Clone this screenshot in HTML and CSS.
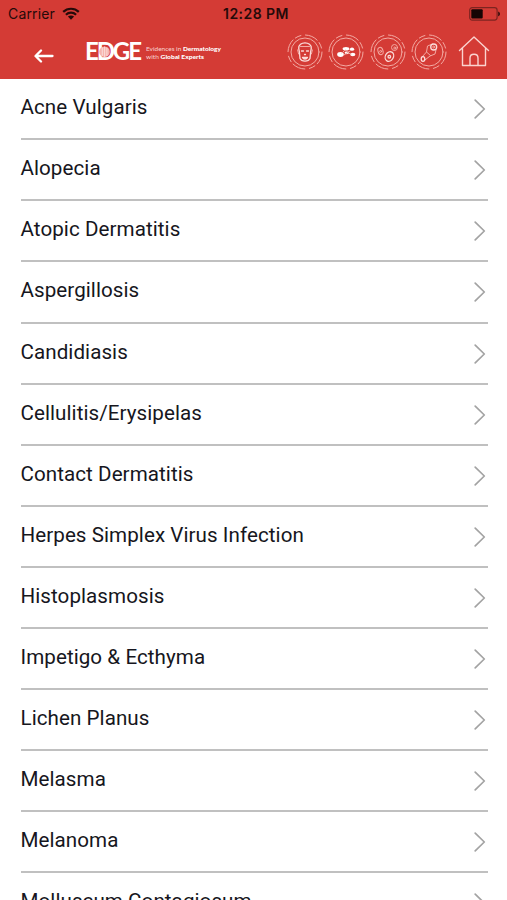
FILE: index.html
```html
<!DOCTYPE html>
<html lang="en">
  <head>
    <meta charset="utf-8" />
    <title>EDGE</title>
    <link rel="stylesheet" href="styles.css" />
  </head>
  <body>
    <header class="header">
      <div class="status-bar">
        <div class="carrier">
          <span>Carrier</span>
          <svg class="wifi" viewBox="0 0 18 13" width="18" height="13">
            <path d="M1.2 4.9C5.6.7 12.4.7 16.8 4.9M3.9 7.7c2.9-2.7 7.3-2.7 10.2 0" />
            <path class="wifi-dot" d="M9 12.7L5.9 9.6c1.8-1.6 4.4-1.6 6.2 0z" />
          </svg>
        </div>
        <span class="time">12:28 PM</span>
        <svg class="battery" viewBox="0 0 32 14" width="32" height="14">
          <rect class="battery-case" x="0.7" y="0.7" width="27.4" height="12.4" rx="2.5" />
          <rect x="2.3" y="2.2" width="11.4" height="9.4" rx="1" />
          <path d="M29.3 4.5c2 .7 2 4.1 0 4.8z" />
        </svg>
      </div>

      <div class="nav-bar">
        <svg class="back" viewBox="0 0 20 14" width="20" height="14">
          <path d="M18.5 7H1.8M7 1.5L1.5 7 7 12.5" />
        </svg>

        <div class="logo">
          <svg class="logo-mark" viewBox="0 0 58 32" width="58" height="32">
            <text x="-1" y="24.2" textLength="57" lengthAdjust="spacing">EDGE</text>
            <circle class="logo-dot" cx="18.5" cy="15.8" r="5.3" />
            <path class="logo-lines" d="M16.3 12v7.5M18.6 11v9.5M20.9 12v7.5" />
          </svg>
          <svg class="logo-tagline" viewBox="0 0 80 20" width="80" height="20">
            <text x="2" y="8" textLength="75" lengthAdjust="spacingAndGlyphs">Evidences in <tspan>Dermatology</tspan></text>
            <text x="2" y="16" textLength="58" lengthAdjust="spacingAndGlyphs">with <tspan>Global Experts</tspan></text>
          </svg>
        </div>

        <div class="tools">
          <!-- Face -->
          <svg class="tool" viewBox="0 0 36 36" width="36" height="36">
            <circle class="ring" cx="18" cy="18" r="17" />
            <circle cx="18" cy="18" r="14" />
            <path class="strong" d="M12.4 18l-.7-3.5c-.6-7.500 13.200-7.500 12.600 0l-.7 3.500-.6 6.500c-1.500 3.500-8.500 3.500-10 0z" />
            <path d="M13.500 12.500h9M11.500 15l-.9 1 1 4M24.500 15l.9 1-1 4" />
            <path class="strong" d="M14.500 17h2M19.500 17h2M17.500 20.500h1M15.500 23.500h5c-1 2-4 2-5 0" />
          </svg>
          <!-- Bacteria -->
          <svg class="tool" viewBox="0 0 36 36" width="36" height="36">
            <circle class="ring" cx="18" cy="18" r="17" />
            <circle cx="18" cy="18" r="14" />
            <g class="solid">
              <ellipse cx="18" cy="14.8" rx="3.4" ry="1.8" />
              <ellipse cx="24" cy="15.2" rx="2.2" ry="1.6" />
              <ellipse cx="12.5" cy="20.5" rx="3.3" ry="2.4" />
              <ellipse cx="18.8" cy="18.8" rx="2.2" ry="1.4" />
              <ellipse cx="24.8" cy="20.5" rx="2.6" ry="1.7" />
            </g>
            <path d="M14 19l3-3M16 21l6-4M20 19l3 1" />
          </svg>
          <!-- Cells -->
          <svg class="tool" viewBox="0 0 36 36" width="36" height="36">
            <circle class="ring" cx="18" cy="18" r="17" />
            <circle cx="18" cy="18" r="14" />
            <ellipse cx="10.5" cy="17" rx="2.5" ry="3.7" transform="rotate(-18 10.5 17)" />
            <circle cx="10.7" cy="17.4" r="1" />
            <ellipse class="strong" cx="19.4" cy="22.5" rx="4" ry="5" transform="rotate(30 19.4 22.5)" />
            <circle class="strong" cx="19.3" cy="22.7" r="1.3" />
            <circle cx="24.5" cy="13.5" r="3" />
            <circle cx="24.8" cy="14" r="1" />
          </svg>
          <!-- Hand and sample -->
          <svg class="tool" viewBox="0 0 36 36" width="36" height="36">
            <circle class="ring" cx="18" cy="18" r="17" />
            <circle cx="18" cy="18" r="14" />
            <path d="M11 23l4.5-5 1-6 5-2M14 26l5-4 5-2 1-4M15.500 18l4 3.500" />
            <circle class="strong" cx="22.7" cy="13" r="3" />
            <circle cx="22.7" cy="13" r="1" />
            <ellipse class="strong" cx="12" cy="25" rx="1.8" ry="2.4" />
          </svg>
          <svg class="home" viewBox="0 0 32 32" width="32" height="32">
            <path d="M1.5 15.5L16 2l14.5 13.5M4.5 13.500v17h23v-17M12 30.500V23c0-5 8-5 8 0v7.500" />
          </svg>
        </div>
      </div>
    </header>

    <ul class="list">
      <li class="item">Acne Vulgaris</li>
      <li class="item">Alopecia</li>
      <li class="item">Atopic Dermatitis</li>
      <li class="item">Aspergillosis</li>
      <li class="item">Candidiasis</li>
      <li class="item">Cellulitis/Erysipelas</li>
      <li class="item">Contact Dermatitis</li>
      <li class="item">Herpes Simplex Virus Infection</li>
      <li class="item">Histoplasmosis</li>
      <li class="item">Impetigo &amp; Ecthyma</li>
      <li class="item">Lichen Planus</li>
      <li class="item">Melasma</li>
      <li class="item">Melanoma</li>
      <li class="item">Molluscum Contagiosum</li>
    </ul>

    <script>
      // Add the chevron to every row
      document.querySelectorAll(".item").forEach((item) => {
        item.insertAdjacentHTML(
          "beforeend",
          '<svg class="chevron" viewBox="0 0 12 20" width="12" height="20"><path d="M1.2 1.2L10.3 10 1.2 18.8" /></svg>'
        );
      });
    </script>
  </body>
</html>
```
FILE: styles.css
```css
body {
  margin: 0;
  height: 900px;
  overflow: hidden;
  background-color: white;
  color: #161620;
  font-family: Roboto, sans-serif;
}
svg {
  display: block;
  flex: none;
  fill: none;
  stroke-linecap: round;
  stroke-linejoin: round;
}
.header {
  height: 79px;
  background-color: #d43b35;
}
.status-bar {
  display: grid;
  grid-template-columns: 1fr auto 1fr;
  align-items: center;
  height: 27px;
  padding: 0 6px 0 8px;
  color: #260a09;
  font-family: Inter, sans-serif;
  font-size: 14px;
}
.carrier {
  display: flex;
  align-items: center;
  gap: 7px;
  letter-spacing: 0.15px;
}
.wifi {
  stroke: #260a09;
  stroke-width: 2.2;
  stroke-linecap: butt;
}
.wifi-dot {
  fill: #260a09;
  stroke: none;
}
.time {
  margin-left: 3px;
  font-weight: 600;
  letter-spacing: 0.45px;
}
.battery {
  justify-self: end;
  fill: #160504;
}
.battery-case {
  fill: none;
  stroke: #7d2420;
  stroke-width: 1.2;
}
.nav-bar {
  display: flex;
  align-items: center;
  height: 50px;
  padding: 0 17px 0 34px;
}
.back {
  margin-top: 7px;
  stroke: white;
  stroke-width: 2.3;
}
.logo {
  display: flex;
  align-items: center;
  margin-left: 32px;
}
.logo-dot {
  fill: #f6b5ae;
}
.logo-lines {
  stroke: #fbdcd9;
  stroke-width: 1;
}
.logo-mark {
  overflow: visible;
}
.logo-mark text {
  fill: white;
  font-family: Lato, sans-serif;
  font-size: 24px;
  font-weight: bold;
}
.logo-tagline {
  margin-top: 2px;
  fill: #f9d5d2;
  font-family: Lato, sans-serif;
  font-size: 6px;
}
.logo-tagline tspan {
  fill: white;
  font-weight: 900;
}
.tools {
  display: flex;
  align-items: center;
  gap: 5.2px;
  margin-left: auto;
}
.tool {
  stroke: #f3aaa3;
  stroke-width: 1;
}
.ring {
  stroke-dasharray: 13 3 6 4.7;
}
.solid {
  fill: white;
  stroke: none;
}
.strong {
  stroke: #fbdcd9;
  stroke-width: 1.3;
}
.home {
  margin-left: 6px;
  margin-top: -3px;
  stroke: #fbd3cf;
  stroke-width: 1.4;
}
.list {
  margin: 0;
  padding: 0 19.5px 0 20.5px;
  list-style: none;
}
.item {
  display: flex;
  align-items: center;
  justify-content: space-between;
  box-sizing: border-box;
  height: 61.08px;
  padding: 0 2px 3px 0;
  border-bottom: 2px solid #c0c0c0;
  font-size: 20.6px;
  letter-spacing: 0.06px;
}
.item:first-child {
  height: 61.3px;
}
.chevron {
  margin-top: 4px;
  stroke: #a3a3a3;
  stroke-width: 1.7;
}
```
